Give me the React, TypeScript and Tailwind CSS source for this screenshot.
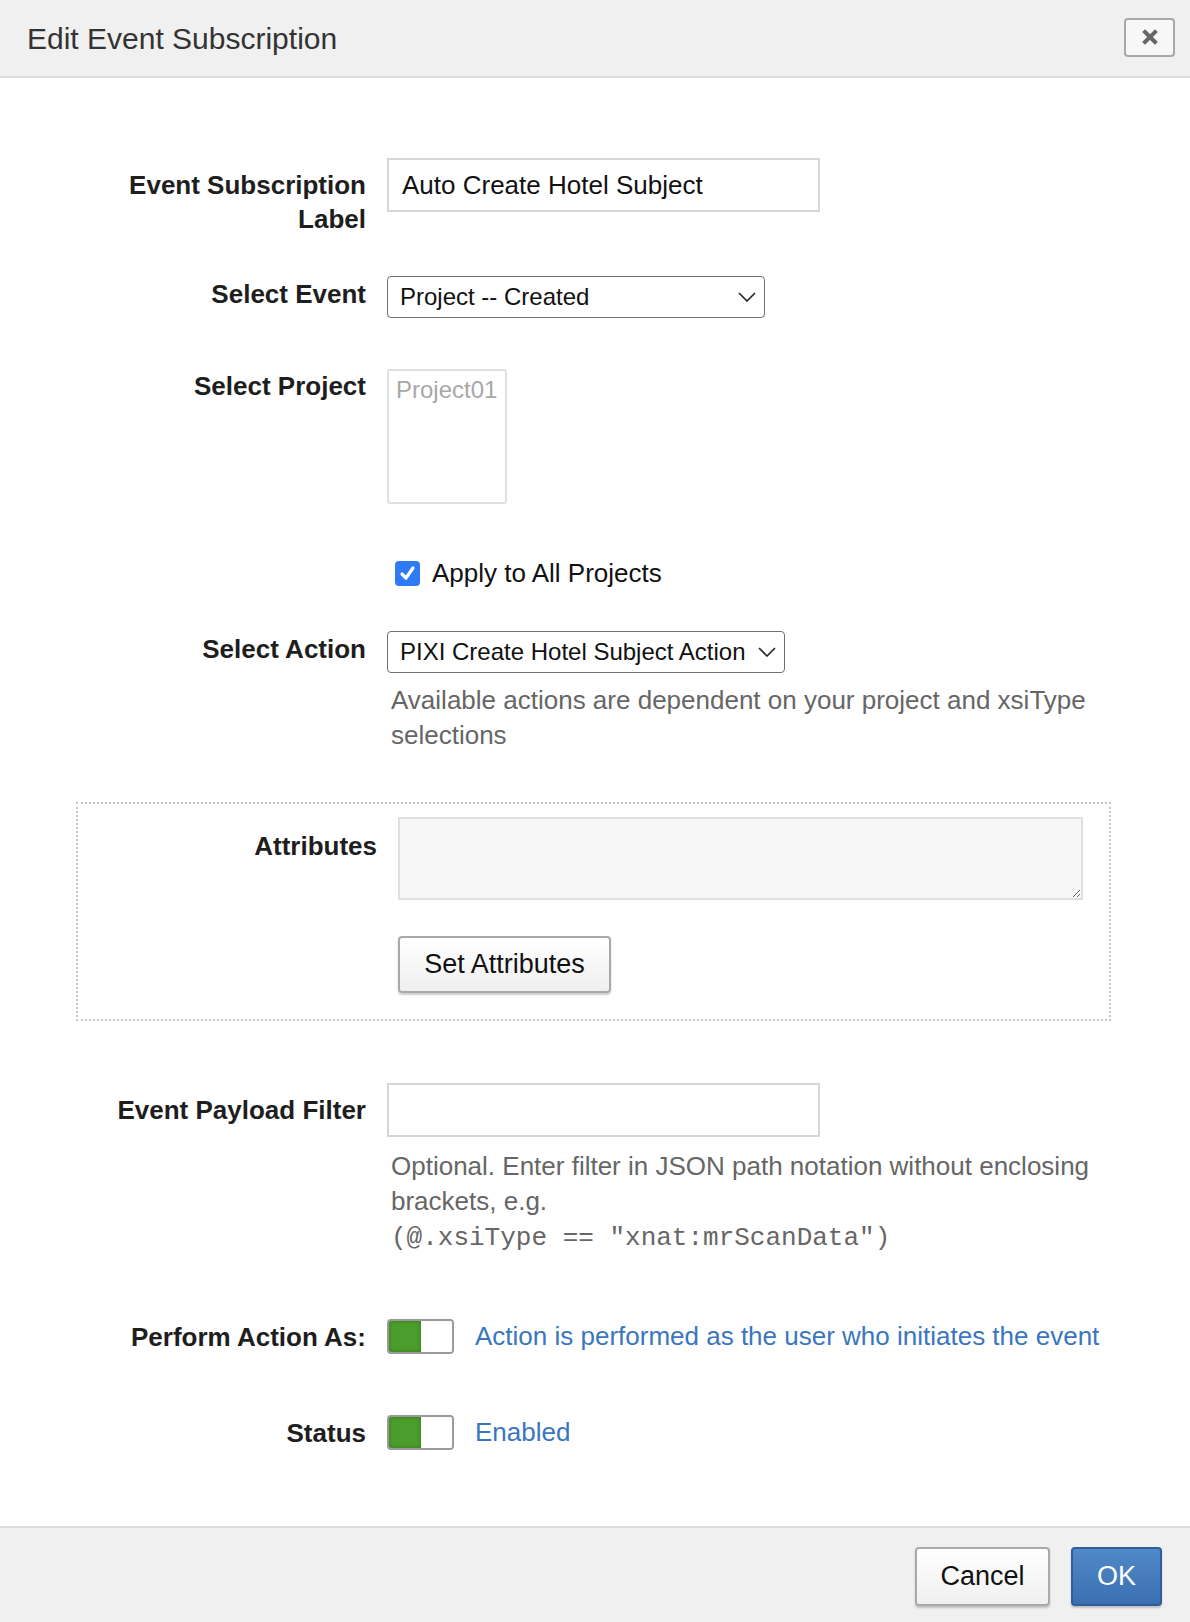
import type { ReactNode } from 'react';

function Label({ children, className = '' }: { children: ReactNode; className?: string }) {
  return (
    <div
      className={`w-[366px] shrink-0 text-right text-[26px] font-bold leading-[34px] text-[#1e1e1e] ${className}`}
    >
      {children}
    </div>
  );
}

function Chevron() {
  return (
    <svg width="18" height="10" viewBox="0 0 18 10" className="shrink-0">
      <path d="M1 1l8 8 8-8" fill="none" stroke="#222" strokeWidth="1.6" />
    </svg>
  );
}

function Toggle() {
  return (
    <div className="flex h-[35px] w-[67px] shrink-0 overflow-hidden rounded-[4px] border-2 border-[#9a9a9a]">
      <div className="h-full w-[32px] bg-[#4b9e2c] shadow-[inset_0_0_4px_rgba(0,0,0,0.25)]" />
      <div className="h-full flex-1 bg-white" />
    </div>
  );
}

export default function App() {
  return (
    <div className="flex h-[1622px] w-[1190px] flex-col bg-white font-['Liberation_Sans',Arial,sans-serif]">
      <header className="flex h-[78px] shrink-0 items-center justify-between border-b-2 border-[#dcdcdc] bg-[#f0f0f0] pl-[27px] pr-[15px]">
        <h1 className="text-[30px] text-[#333]">Edit Event Subscription</h1>
        <button
          type="button"
          aria-label="Close"
          className="mb-[2px] flex h-[39px] w-[51px] items-center justify-center rounded-[4px] border-2 border-[#a8a8a8] bg-[#f7f7f7]"
        >
          <svg width="16" height="16" viewBox="0 0 16 16">
            <path d="M3 3l10 10M13 3L3 13" stroke="#666" strokeWidth="4" strokeLinecap="square" />
          </svg>
        </button>
      </header>

      <main className="flex-1 pt-[80px]">
        <div className="flex items-start gap-[21px]">
          <Label className="pt-[10px]">
            Event Subscription
            <br />
            Label
          </Label>
          <input
            type="text"
            defaultValue="Auto Create Hotel Subject"
            className="h-[54px] w-[433px] border-2 border-[#d6d6d6] px-[13px] text-[26px] text-[#111] outline-none"
          />
        </div>

        <div className="mt-[40px] flex items-start gap-[21px]">
          <Label className="pt-[1px]">Select Event</Label>
          <div className="flex h-[42px] w-[378px] items-center justify-between rounded-[4px] border-[1.5px] border-[#6f6f6f] pl-[12px] pr-[8px] text-[24px] text-[#111]">
            <span className="whitespace-nowrap">Project -- Created</span>
            <Chevron />
          </div>
        </div>

        <div className="mt-[51px] flex items-start gap-[21px]">
          <Label>Select Project</Label>
          <div className="h-[135px] w-[120px] rounded-[3px] border-2 border-[#e0e0e0] px-[7px] pt-[2px] text-[24px] leading-[34px] text-[#a8a8a8]">
            Project01
          </div>
        </div>

        <div className="mt-[52px] flex items-center pl-[395px]">
          <span className="flex h-[25px] w-[25px] items-center justify-center rounded-[4px] bg-[#2f7bf5]">
            <svg width="17" height="17" viewBox="0 0 17 17">
              <path d="M3 9l4 4 7-10" fill="none" stroke="#fff" strokeWidth="3.2" strokeLinecap="round" strokeLinejoin="round" />
            </svg>
          </span>
          <span className="ml-[12px] text-[26px] leading-[34px] text-[#111]">Apply to All Projects</span>
        </div>

        <div className="mt-[41px] flex items-start gap-[21px]">
          <Label className="pt-[1px]">Select Action</Label>
          <div className="flex w-[723px] flex-col">
            <div className="flex h-[42px] w-[398px] items-center justify-between rounded-[4px] border-[1.5px] border-[#6f6f6f] pl-[12px] pr-[8px] text-[24px] text-[#111]">
              <span className="whitespace-nowrap">PIXI Create Hotel Subject Action</span>
              <Chevron />
            </div>
            <p className="mt-[10px] pl-[4px] text-[26px] leading-[35px] text-[#666]">
              Available actions are dependent on your project and xsiType selections
            </p>
          </div>
        </div>

        <div className="ml-[76px] mt-[49px] w-[1035px] border-2 border-dotted border-[#c4c4c4] pb-[26px] pt-[13px]">
          <div className="flex items-start gap-[21px]">
            <div className="w-[299px] shrink-0 pt-[12px] text-right text-[26px] font-bold leading-[34px] text-[#1e1e1e]">
              Attributes
            </div>
            <textarea className="h-[83px] w-[685px] border-2 border-[#e0e0e0] bg-[#f7f7f7] outline-none" />
          </div>
          <button
            type="button"
            className="ml-[320px] mt-[36px] h-[57px] w-[213px] rounded-[4px] border-2 border-[#a9a9a9] bg-gradient-to-b from-white to-[#efefef] text-[27px] text-[#111] shadow-[0_2px_2px_rgba(0,0,0,0.2)]"
          >
            Set Attributes
          </button>
        </div>

        <div className="mt-[62px] flex items-start gap-[21px]">
          <Label className="pt-[10px]">Event Payload Filter</Label>
          <div className="flex w-[723px] flex-col">
            <input
              type="text"
              className="h-[54px] w-[433px] border-2 border-[#d6d6d6] px-[13px] text-[26px] outline-none"
            />
            <div className="mt-[12px] pl-[4px] text-[26px] leading-[35px] text-[#666]">
              <p>Optional. Enter filter in JSON path notation without enclosing brackets, e.g.</p>
              <p className="font-['Liberation_Mono','Courier_New',monospace] text-[26px] leading-[38px]">
                (@.xsiType == "xnat:mrScanData")
              </p>
            </div>
          </div>
        </div>

        <div className="mt-[60px] flex items-center gap-[21px]">
          <Label>Perform Action As:</Label>
          <Toggle />
          <span className="text-[26px] text-[#3a76bf]">Action is performed as the user who initiates the event</span>
        </div>

        <div className="mt-[57px] flex items-center gap-[21px]">
          <Label>Status</Label>
          <Toggle />
          <span className="text-[26px] text-[#3a76bf]">Enabled</span>
        </div>
      </main>

      <footer className="flex h-[96px] shrink-0 items-start justify-end gap-[21px] border-t-2 border-[#dcdcdc] bg-[#f0f0f0] pr-[28px] pt-[19px]">
        <button
          type="button"
          className="h-[59px] w-[135px] rounded-[4px] border-2 border-[#a9a9a9] bg-gradient-to-b from-white to-[#f0f0f0] text-[27px] text-[#111] shadow-[0_2px_2px_rgba(0,0,0,0.2)]"
        >
          Cancel
        </button>
        <button
          type="button"
          className="h-[59px] w-[91px] rounded-[4px] border-2 border-[#2f5e9a] bg-gradient-to-b from-[#5089c7] to-[#3a70b2] text-[27px] text-white shadow-[0_2px_2px_rgba(0,0,0,0.2)]"
        >
          OK
        </button>
      </footer>
    </div>
  );
}
